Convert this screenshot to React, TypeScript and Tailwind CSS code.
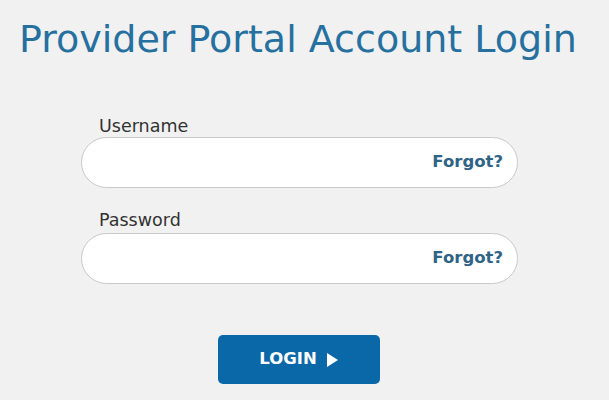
export default function App() {
  return (
    <div
      className="w-[609px] h-[400px] bg-[#f1f1f1] overflow-hidden"
      style={{ fontFamily: "'DejaVu Sans', sans-serif" }}
    >
      {/* header */}
      <h1 className="pl-[19px] pt-[16px] text-[38px] leading-[46px] text-[#2670a0]">
        Provider Portal Account Login
      </h1>

      {/* form */}
      <form className="w-[437px] ml-[81px] mt-[54px]">
        <label className="block pl-[18px] text-[17.5px] leading-[20px] text-[#333]">Username</label>
        <div className="mt-[1px] h-[51px] rounded-full bg-white border border-[#c9c9c9] flex items-center justify-end pr-[14px]">
          <span className="text-[16.5px] font-bold text-[#2f6487]">Forgot?</span>
        </div>

        <label className="block mt-[22px] pl-[18px] text-[17.5px] leading-[20px] text-[#333]">Password</label>
        <div className="mt-[3px] h-[51px] rounded-full bg-white border border-[#c9c9c9] flex items-center justify-end pr-[14px]">
          <span className="text-[16.5px] font-bold text-[#2f6487]">Forgot?</span>
        </div>

        <div className="flex justify-center mt-[51px] pr-[2px]">
          <button
            type="button"
            className="w-[162px] h-[49px] rounded-[5px] bg-[#0b68a8] text-white text-[16.5px] font-bold flex items-center justify-center gap-[10px]"
          >
            LOGIN
            <svg width="11" height="14" viewBox="0 0 11 14">
              <path d="M0 0 L11 7 L0 14 Z" fill="white" />
            </svg>
          </button>
        </div>
      </form>
    </div>
  );
}
